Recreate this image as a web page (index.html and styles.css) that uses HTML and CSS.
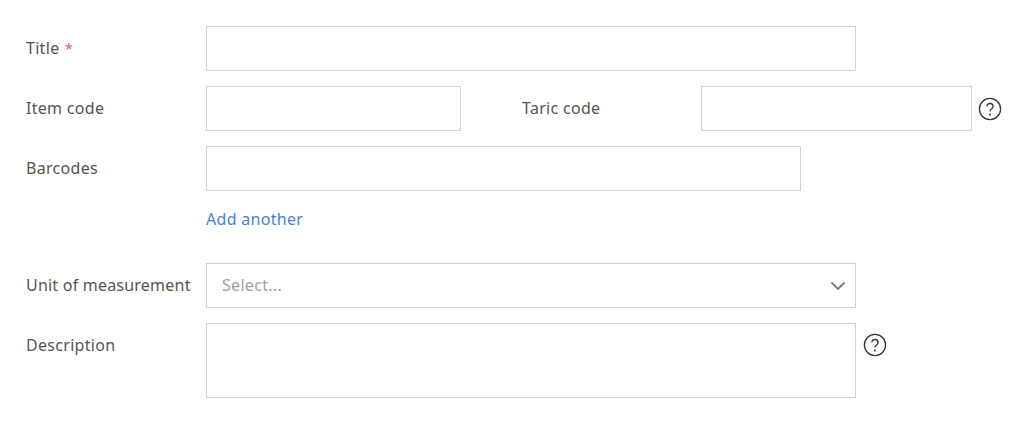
FILE: index.html
```html
<!DOCTYPE html>
<html lang="en">
<head>
    <meta charset="UTF-8">
    <title>Item details</title>
    <link rel="stylesheet" href="styles.css">
</head>
<body>
    <form class="item-form">
        <div class="row">
            <label class="label">Title <span class="required">*</span></label>
            <input class="field field-full" type="text">
        </div>
        <div class="row">
            <label class="label">Item code</label>
            <input class="field field-code" type="text">
            <label class="label label-taric">Taric code</label>
            <input class="field field-taric" type="text">
            <span class="help">
                <svg width="24" height="24" viewBox="0 0 24 24"><circle cx="12" cy="12" r="10.6"/><path d="M8.9 9.6c0-1.9 1.3-3.1 3.1-3.1s3.100 1.200 3.100 2.900c0 2.400-3.100 2.600-3.100 5.100"/><path class="dot" d="M12 16.600v1.800"/></svg>
            </span>
        </div>
        <div class="row row-barcodes">
            <label class="label">Barcodes</label>
            <input class="field field-barcode" type="text">
        </div>
        <a class="add-link" href="#">Add another</a>
        <div class="row">
            <label class="label label-long">Unit of measurement</label>
            <div class="field field-full select">
                <span class="placeholder">Select...</span>
                <svg width="16" height="10" viewBox="0 0 16 10"><path d="M1.500 1.500 8 8l6.500-6.500"/></svg>
            </div>
        </div>
        <div class="row row-top">
            <label class="label">Description</label>
            <textarea class="field field-full area"></textarea>
            <span class="help help-area">
                <svg width="24" height="24" viewBox="0 0 24 24"><circle cx="12" cy="12" r="10.6"/><path d="M8.9 9.6c0-1.9 1.3-3.1 3.1-3.1s3.100 1.200 3.100 2.900c0 2.400-3.100 2.600-3.100 5.100"/><path class="dot" d="M12 16.600v1.800"/></svg>
            </span>
        </div>
    </form>
</body>
</html>
```

FILE: styles.css
```css
body {
    margin: 0;
    background: #fff;
    font-family: "Noto Sans", "Open Sans", sans-serif;
    font-size: 16px;
    letter-spacing: 0.3px;
    color: #58544e;
}
.item-form {
    padding: 26px 0 0 26px;
}
.row {
    display: flex;
    align-items: center;
    margin-bottom: 15px;
}
.row-top {
    align-items: flex-start;
}
.row-barcodes {
    margin-bottom: 17px;
}
.label {
    width: 180px;
    flex: none;
    line-height: 45px;
    white-space: nowrap;
}
.label-long {
    letter-spacing: 0.22px;
}
.row-top .label {
    line-height: 44px;
}
.label-taric {
    width: 179px;
    margin-left: 61px;
}
.required {
    color: #e0566f;
    font-size: 14px;
    margin-left: 1px;
}
.field {
    display: block;
    box-sizing: border-box;
    height: 45px;
    padding: 0 15px;
    border: 1px solid #d2d2d2;
    border-radius: 0;
    background: #fff;
    font: inherit;
    outline: none;
}
.field-full {
    width: 650px;
}
.field-code {
    width: 255px;
}
.field-taric {
    width: 271px;
}
.field-barcode {
    width: 595px;
}
.select {
    display: flex;
    align-items: center;
    justify-content: space-between;
    padding-right: 9px;
}
.select svg {
    fill: none;
    stroke: #7a7a7a;
    stroke-width: 1.800;
}
.placeholder {
    color: #a0a0a0;
    margin-top: -2px;
}
.area {
    height: 75px;
    resize: none;
}
.help {
    display: flex;
    margin-left: 6px;
}
.help-area {
    margin-left: 7px;
    margin-top: 10px;
}
.help svg {
    fill: none;
    stroke: #333;
    stroke-width: 1.300;
}
.help .dot {
    stroke-width: 1.600;
}
.add-link {
    display: block;
    margin: 0 0 33px 180px;
    line-height: 22px;
    color: #4a7fd6;
    text-decoration: none;
}
```
